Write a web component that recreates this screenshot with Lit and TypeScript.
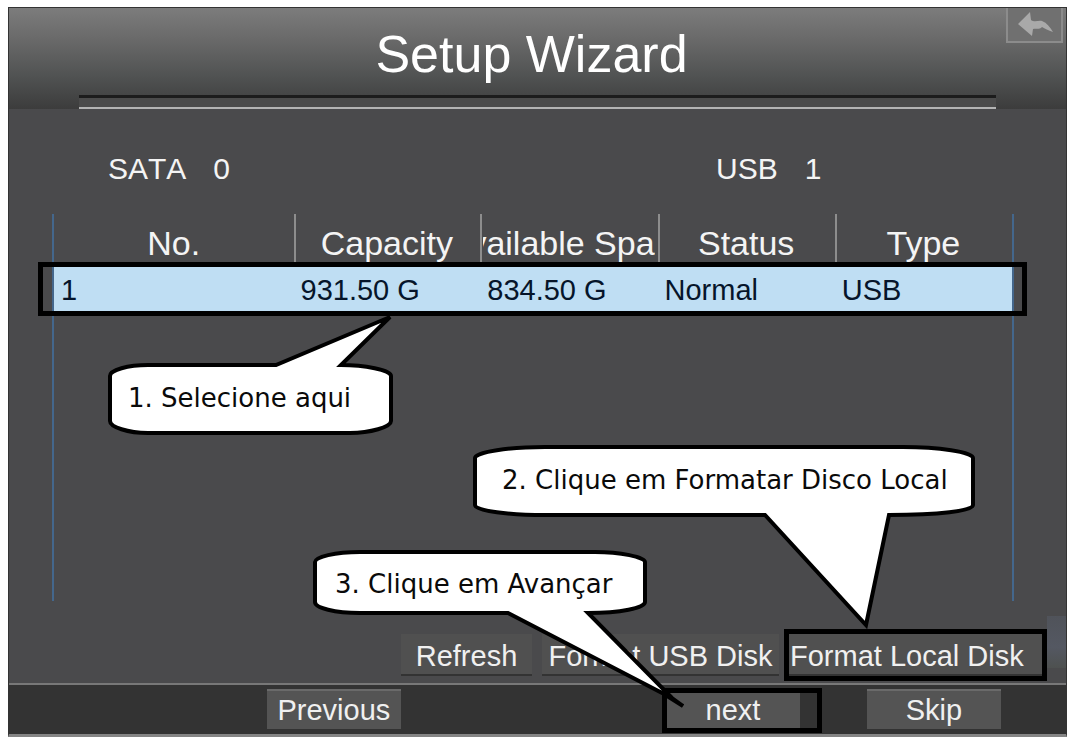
import { LitElement, html, css, svg } from "lit";
import { customElement, property } from "lit/decorators.js";

interface Disk {
  no: number;
  capacity: string;
  available: string;
  status: string;
  type: string;
}

interface Shape {
  viewBox: string;
  path: string;
}

const SHAPES: Record<string, Shape> = {
  select: {
    viewBox: "100 310 300 130",
    path: "M148 365H276L390 317L341 365C364 365 391 370 391 376V421C391 427 370 433 350 433H148C128 433 110 427 110 421V376C110 370 128 365 148 365Z",
  },
  format: {
    viewBox: "465 440 520 190",
    path: "M545 447H903C938 447 973 452 973 458V505C973 511 938 515 889 515L866 625L765 515H545C510 515 475 511 475 505V458C475 452 510 447 545 447Z",
  },
  advance: {
    viewBox: "305 545 400 165",
    path: "M360 552H595C620 552 645 557 645 562V602C645 608 620 613 588 613L672 698L683 706L664 694L508 613H360C335 613 315 608 315 602V562C315 557 335 552 360 552Z",
  },
};

@customElement("callout-bubble")
export class CalloutBubble extends LitElement {
  static styles = css`
    :host {
      display: block;
      pointer-events: none;
    }
    .shape {
      display: block;
      width: 100%;
      height: 100%;
      fill: #fff;
      stroke: #000;
      stroke-width: 4;
    }
    .label {
      position: absolute;
      inset: 0;
      padding: var(--label-inset);
      font: 26px/32px "DejaVu Sans", Verdana, sans-serif;
      color: #0a0a0a;
      white-space: nowrap;
    }
  `;

  @property() kind = "select";

  render() {
    const shape = SHAPES[this.kind];
    return html`
      <svg class="shape" viewBox=${shape.viewBox} aria-hidden="true">
        ${svg`<path d=${shape.path}></path>`}
      </svg>
      <div class="label"><slot></slot></div>
    `;
  }
}

@customElement("app-root")
export class AppRoot extends LitElement {
  static styles = css`
    :host {
      display: flex;
      flex-direction: column;
      box-sizing: border-box;
      min-height: 100vh;
      padding: 7px 4px 0 8px;
      background: #fff;
      color: #f4f4f4;
      font-family: "Liberation Sans", Arial, sans-serif;
    }
    * {
      box-sizing: border-box;
    }
    .frame {
      position: relative;
      flex: 1;
      display: flex;
      flex-direction: column;
      border: 1px solid #333;
      border-bottom: 3px solid #858585;
      background: #4a4a4c;
    }
    .header {
      position: relative;
      height: 101px;
      padding: 16px 70px 0;
      background: linear-gradient(#7c7c7c, #6a6a6a 30%, #505252 68%, #3c3c3c);
    }
    .title {
      margin: 0;
      padding-right: 12px;
      font-size: 52px;
      font-weight: 400;
      line-height: 60px;
      text-align: center;
      color: #fff;
    }
    .rule {
      height: 14px;
      margin-top: 11px;
      border-top: 3px solid #1c1c1c;
      border-bottom: 2px solid #b4b4b4;
      background: #4b4b4b;
    }
    .back {
      position: absolute;
      top: 0;
      right: 3px;
      width: 57px;
      height: 35px;
      padding: 0;
      border: 2px solid #8c8c8c;
      border-top: 0;
      background: #707070;
    }
    .arrow {
      display: block;
      width: 53px;
      height: 33px;
      fill: #a9a9a9;
    }
    .content {
      flex: 1;
      display: flex;
      flex-direction: column;
    }
    .counts {
      display: grid;
      grid-template-columns: 64% 1fr;
      margin: 42px 8px 0 99px;
      font-size: 30px;
      line-height: 36px;
      font-kerning: none;
    }
    .count {
      display: flex;
      gap: 27px;
    }
    .list {
      position: relative;
      flex: 1;
      margin: 27px 52px 0 43px;
      border: solid #44678c;
      border-width: 0 2px;
    }
    .disks {
      width: 100%;
      table-layout: fixed;
      border-collapse: collapse;
      text-align: left;
    }
    .wide {
      width: 25%;
    }
    .medium {
      width: 19.5%;
    }
    .head {
      height: 53px;
      padding: 0;
      font-size: 34px;
      font-weight: 400;
      line-height: 58px;
      background: linear-gradient(#8d8d8d, #8d8d8d) left top / 2px 100% no-repeat;
    }
    .head:first-child {
      background: none;
    }
    .clip {
      display: flex;
      justify-content: center;
      height: 53px;
      margin: 0 3px;
      overflow: hidden;
      white-space: nowrap;
    }
    .cell {
      height: 44px;
      padding: 2px 7px 0;
      font-size: 29px;
      line-height: 42px;
      color: #06152a;
      background: #bfdef3;
    }
    .marker {
      position: absolute;
      border: 5px solid #000;
      pointer-events: none;
    }
    .row-marker {
      top: 48px;
      left: -16px;
      right: -15px;
      height: 54px;
    }
    .toolbar {
      display: flex;
      justify-content: flex-end;
      gap: 10px;
      margin-top: 33px;
      padding: 0 24px 7px;
    }
    .button {
      position: relative;
      height: 42px;
      padding: 4px 0 0;
      border: 0;
      border-bottom: 2px solid #333;
      font: 29px/34px "Liberation Sans", Arial, sans-serif;
      color: #f0f0f0;
      background: #505050;
      white-space: nowrap;
    }
    .refresh {
      width: 131px;
    }
    .usb {
      width: 237px;
    }
    .local {
      width: 253px;
      padding-left: 1px;
      text-align: left;
    }
    .local-marker {
      inset: -5px -5px -7px;
    }
    .footer {
      display: flex;
      gap: 67px;
      height: 51px;
      padding: 4px 65px 6px 0;
      border-top: 2px solid #787878;
      background: #333;
    }
    .nav {
      width: 134px;
      height: 40px;
      padding: 0;
      border-top: 2px solid #6a6a6a;
      border-bottom: 0;
      background: #545454;
    }
    .previous {
      margin-left: 26%;
      margin-right: auto;
    }
    .next-marker {
      inset: -3px -22px -4px -4px;
    }
    .edge {
      position: absolute;
      right: 0;
      bottom: 66px;
      width: 19px;
      height: 52px;
      background: linear-gradient(#50535a, #545862 60%, #4e5150);
    }
    .callout {
      position: absolute;
    }
    .select {
      left: 91px;
      top: 302px;
      width: 300px;
      height: 130px;
      --label-inset: 72px 0 0 28px;
    }
    .format {
      right: 81px;
      top: 432px;
      width: 520px;
      height: 190px;
      --label-inset: 24px 0 0 37px;
    }
    .advance {
      right: 361px;
      top: 537px;
      width: 400px;
      height: 165px;
      --label-inset: 23px 0 0 30px;
    }
  `;

  @property({ attribute: false }) disks: Disk[] = [
    { no: 1, capacity: "931.50 G", available: "834.50 G", status: "Normal", type: "USB" },
  ];

  private columns = [
    { label: "No.", size: "wide" },
    { label: "Capacity", size: "medium" },
    { label: "Available Space", size: "" },
    { label: "Status", size: "" },
    { label: "Type", size: "" },
  ];

  render() {
    return html`
      <main class="frame">
        <header class="header">
          <h1 class="title">Setup Wizard</h1>
          <div class="rule"></div>
          <button class="back" aria-label="Back">
            <svg class="arrow" viewBox="1008 8 53 33" aria-hidden="true">
              <path d="M1018 24L1030 12L1031 20C1035 23 1038 20 1042 21C1047 23 1050 27 1053 32C1048 30 1045 29 1042 27C1039 30 1036 28 1033 29L1032 36Z"></path>
            </svg>
          </button>
        </header>
        <section class="content">
          <div class="counts">
            <div class="count"><span>SATA</span><span>0</span></div>
            <div class="count"><span>USB</span><span>1</span></div>
          </div>
          <div class="list">
            <table class="disks">
              <thead>
                <tr>
                  ${this.columns.map(
                    (c) => html`<th class="head ${c.size}" scope="col"><div class="clip"><span>${c.label}</span></div></th>`
                  )}
                </tr>
              </thead>
              <tbody>
                ${this.disks.map(
                  (d) => html`<tr>
                    <td class="cell">${d.no}</td>
                    <td class="cell">${d.capacity}</td>
                    <td class="cell">${d.available}</td>
                    <td class="cell">${d.status}</td>
                    <td class="cell">${d.type}</td>
                  </tr>`
                )}
              </tbody>
            </table>
            <div class="marker row-marker"></div>
          </div>
          <div class="toolbar">
            <button class="button refresh">Refresh</button>
            <button class="button usb">Format USB Disk</button>
            <button class="button local">Format Local Disk<span class="marker local-marker"></span></button>
          </div>
        </section>
        <footer class="footer">
          <button class="button nav previous">Previous</button>
          <button class="button nav">next<span class="marker next-marker"></span></button>
          <button class="button nav">Skip</button>
        </footer>
        <div class="edge"></div>
        <callout-bubble class="callout select" kind="select">1. Selecione aqui</callout-bubble>
        <callout-bubble class="callout format" kind="format">2. Clique em Formatar Disco Local</callout-bubble>
        <callout-bubble class="callout advance" kind="advance">3. Clique em Avançar</callout-bubble>
      </main>
    `;
  }
}
